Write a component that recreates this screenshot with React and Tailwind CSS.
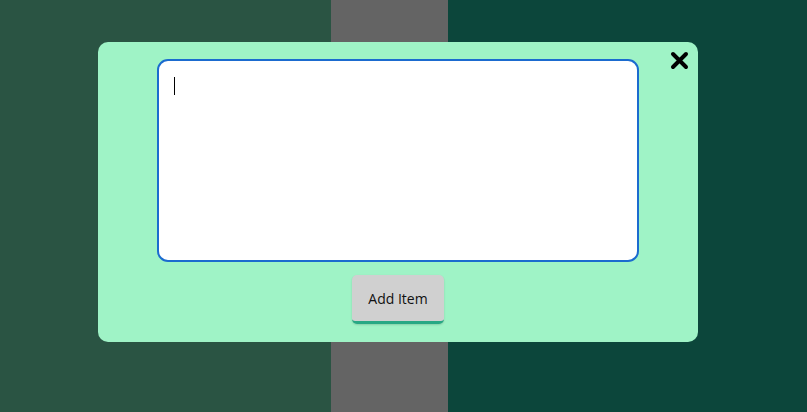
import { useState } from 'react'

export default function App() {
  const [text, setText] = useState('')

  return (
    <div className="relative w-[807px] h-[412px] overflow-hidden font-['Open_Sans',sans-serif]">
      {/* page behind the overlay */}
      <div className="flex h-full">
        <div className="w-[331px] bg-[#2a5443]"></div>
        <div className="w-[117px] bg-[#646464]"></div>
        <div className="flex-1 bg-[#0c463b]"></div>
      </div>

      {/* modal */}
      <div className="absolute left-[98px] top-[42px] w-[600px] h-[300px] rounded-[10px] bg-[#9ff3c6] flex flex-col items-center pt-[17px]">
        <button className="absolute right-[9px] top-[8px] w-[20px] h-[20px] flex items-center justify-center">
          <svg width="19" height="19" viewBox="0 0 19 19">
            <path d="M3 3 L16 16 M16 3 L3 16" stroke="#000" strokeWidth="4" strokeLinecap="round" />
          </svg>
        </button>

        <div className="relative">
          <textarea
            autoFocus
            value={text}
            onChange={(e) => setText(e.target.value)}
            className="block w-[482px] h-[203px] bg-white border-2 border-[#1b6bcf] rounded-[11px] outline-none resize-none px-4 py-[14px] text-base text-black caret-transparent"
          />
          {text === '' && (
            <span className="absolute left-[17px] top-[18px] w-[1px] h-[18px] bg-black pointer-events-none"></span>
          )}
        </div>

        <button className="mt-[13px] w-[92px] h-[49px] bg-[#d0d0d0] rounded-[5px] border-b-[3px] border-[#27a884] text-[14px] text-[#111] shadow-[0_1px_2px_rgba(0,0,0,0.15)]">
          Add Item
        </button>
      </div>
    </div>
  )
}
